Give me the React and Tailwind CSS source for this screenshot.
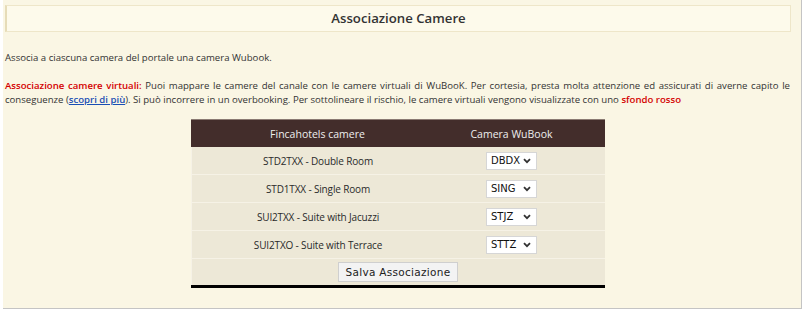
const ROWS = [
  { name: "STD2TXX - Double Room", code: "DBDX" },
  { name: "STD1TXX - Single Room", code: "SING" },
  { name: "SUI2TXX - Suite with Jacuzzi", code: "STJZ" },
  { name: "SUI2TXO - Suite with Terrace", code: "STTZ" },
];

function FakeSelect({ value }) {
  return (
    <div className="flex h-[18px] w-[51px] items-center justify-between border border-[#d6d6d6] bg-white pl-[4px] pr-[5px]">
      <span className="text-[10px] text-[#111] [font-family:'DejaVu_Sans',sans-serif]">{value}</span>
      <svg width="8" height="6" viewBox="0 0 8 6">
        <path d="M1 1.2 L4 4.2 L7 1.2" fill="none" stroke="#333" strokeWidth="1.8" />
      </svg>
    </div>
  );
}

export default function App() {
  return (
    <div className="h-[318px] w-[808px] bg-white [font-family:'Open_Sans',sans-serif] text-[#333]">
      {/* Panel */}
      <div className="ml-[3px] h-[309px] w-[799px] border-r border-b border-[#c4c4c4] bg-[#faf6e4] pt-[5px]">
        <div className="ml-[2px] flex h-[27px] w-[786px] items-center justify-center border border-l-2 border-[#eee6c9] border-l-[#e6dcb8] bg-[#fdfaeb]">
          <h1 className="text-[13.2px] font-semibold text-[#333]">Associazione Camere</h1>
        </div>

        <div className="ml-[2px] w-[785px] text-[9.6px] leading-[14px]">
          <p className="mt-[19px]">Associa a ciascuna camera del portale una camera Wubook.</p>
          <p className="mt-[14px] text-justify">
            <b className="font-semibold text-[#d40000]">Associazione camere virtuali:</b> Puoi mappare le camere del canale con le camere virtuali di WuBooK. Per cortesia, presta molta attenzione ed assicurati di averne capito le conseguenze (<a className="font-semibold text-[#1a4fb4] underline">scopri di più</a>). Si può incorrere in un overbooking. Per sottolineare il rischio, le camere virtuali vengono visualizzate con uno <b className="font-semibold text-[#d40000]">sfondo rosso</b>
          </p>

          {/* Table */}
          <div className="mx-auto mt-[12px] w-[414px] border-b-[3px] border-black">
            <div className="flex h-[28px] items-center border-t border-[#8a7a72] bg-[#432d2b] text-[10.5px] text-[#eee]">
              <div className="w-[254px] text-center">Fincahotels camere</div>
              <div className="flex-1 pr-[26px] text-center">Camera WuBook</div>
            </div>
            {ROWS.map((r) => (
              <div key={r.code} className="flex h-[28px] items-center border-b border-l border-[#f6f2e6] bg-[#ede8d7]">
                <div className="w-[253px] text-center text-[10px] tracking-[-0.15px] text-[#2a2a2a]">{r.name}</div>
                <div className="flex flex-1 justify-center pr-[26px]">
                  <FakeSelect value={r.code} />
                </div>
              </div>
            ))}
            <div className="flex h-[26px] items-center justify-center border-l border-[#f6f2e6] bg-[#ede8d7]">
              <button className="h-[20px] w-[120px] whitespace-nowrap border border-[#cfcfcf] bg-[#f3f3f3] text-[10.5px] tracking-[0.3px] text-[#222] [font-family:'DejaVu_Sans',sans-serif]">
                Salva Associazione
              </button>
            </div>
          </div>
        </div>
      </div>
    </div>
  );
}
